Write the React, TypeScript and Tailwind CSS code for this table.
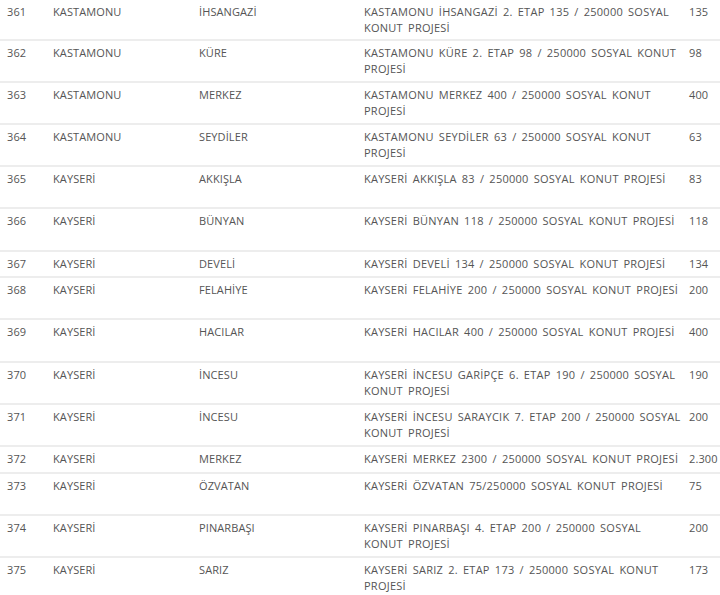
import React from "react";

type Row = { n: string; il: string; ilce: string; proje: string[]; adet: string; h: number };

const rows: Row[] = [
  { n: "361", il: "KASTAMONU", ilce: "İHSANGAZİ", proje: ["KASTAMONU İHSANGAZİ 2. ETAP 135 / 250000 SOSYAL", "KONUT PROJESİ"], adet: "135", h: 41 },
  { n: "362", il: "KASTAMONU", ilce: "KÜRE", proje: ["KASTAMONU KÜRE 2. ETAP 98 / 250000 SOSYAL KONUT", "PROJESİ"], adet: "98", h: 42 },
  { n: "363", il: "KASTAMONU", ilce: "MERKEZ", proje: ["KASTAMONU MERKEZ 400 / 250000 SOSYAL KONUT", "PROJESİ"], adet: "400", h: 42 },
  { n: "364", il: "KASTAMONU", ilce: "SEYDİLER", proje: ["KASTAMONU SEYDİLER 63 / 250000 SOSYAL KONUT", "PROJESİ"], adet: "63", h: 42 },
  { n: "365", il: "KAYSERİ", ilce: "AKKIŞLA", proje: ["KAYSERİ AKKIŞLA 83 / 250000 SOSYAL KONUT PROJESİ"], adet: "83", h: 42 },
  { n: "366", il: "KAYSERİ", ilce: "BÜNYAN", proje: ["KAYSERİ BÜNYAN 118 / 250000 SOSYAL KONUT PROJESİ"], adet: "118", h: 43 },
  { n: "367", il: "KAYSERİ", ilce: "DEVELİ", proje: ["KAYSERİ DEVELİ 134 / 250000 SOSYAL KONUT PROJESİ"], adet: "134", h: 26 },
  { n: "368", il: "KAYSERİ", ilce: "FELAHİYE", proje: ["KAYSERİ FELAHİYE 200 / 250000 SOSYAL KONUT PROJESİ"], adet: "200", h: 42 },
  { n: "369", il: "KAYSERİ", ilce: "HACILAR", proje: ["KAYSERİ HACILAR 400 / 250000 SOSYAL KONUT PROJESİ"], adet: "400", h: 43 },
  { n: "370", il: "KAYSERİ", ilce: "İNCESU", proje: ["KAYSERİ İNCESU GARİPÇE 6. ETAP 190 / 250000 SOSYAL", "KONUT PROJESİ"], adet: "190", h: 42 },
  { n: "371", il: "KAYSERİ", ilce: "İNCESU", proje: ["KAYSERİ İNCESU SARAYCIK 7. ETAP 200 / 250000 SOSYAL", "KONUT PROJESİ"], adet: "200", h: 42 },
  { n: "372", il: "KAYSERİ", ilce: "MERKEZ", proje: ["KAYSERİ MERKEZ 2300 / 250000 SOSYAL KONUT PROJESİ"], adet: "2.300", h: 27 },
  { n: "373", il: "KAYSERİ", ilce: "ÖZVATAN", proje: ["KAYSERİ ÖZVATAN 75/250000 SOSYAL KONUT PROJESİ"], adet: "75", h: 42 },
  { n: "374", il: "KAYSERİ", ilce: "PINARBAŞI", proje: ["KAYSERİ PINARBAŞI 4. ETAP 200 / 250000 SOSYAL", "KONUT PROJESİ"], adet: "200", h: 42 },
  { n: "375", il: "KAYSERİ", ilce: "SARIZ", proje: ["KAYSERİ SARIZ 2. ETAP 173 / 250000 SOSYAL KONUT", "PROJESİ"], adet: "173", h: 42 },
];

export default function App() {
  return (
    <div
      className="w-[720px] h-[595px] overflow-hidden bg-white text-[#555555] text-[11px] leading-[16px] tracking-[0.1px]"
      style={{ fontFamily: '"Open Sans", "DejaVu Sans", sans-serif' }}
    >
      {rows.map((r, i) => (
        <div
          key={r.n}
          className={`grid grid-cols-[46px_146px_165px_325px_60px] w-[742px] pt-[4px] ${i < rows.length - 1 ? "border-b-2 border-[#ededed]" : ""}`}
          style={{ height: r.h }}
        >
          <div className="pl-[7px] whitespace-nowrap">{r.n}</div>
          <div className="pl-[7px] whitespace-nowrap">{r.il}</div>
          <div className="pl-[7px] whitespace-nowrap">{r.ilce}</div>
          <div className="pl-[7px] tracking-[0.25px] [word-spacing:2px]">
            {r.proje.map((l) => (
              <div key={l} className="whitespace-nowrap">{l}</div>
            ))}
          </div>
          <div className="pl-[7px] whitespace-nowrap">{r.adet}</div>
        </div>
      ))}
    </div>
  );
}
